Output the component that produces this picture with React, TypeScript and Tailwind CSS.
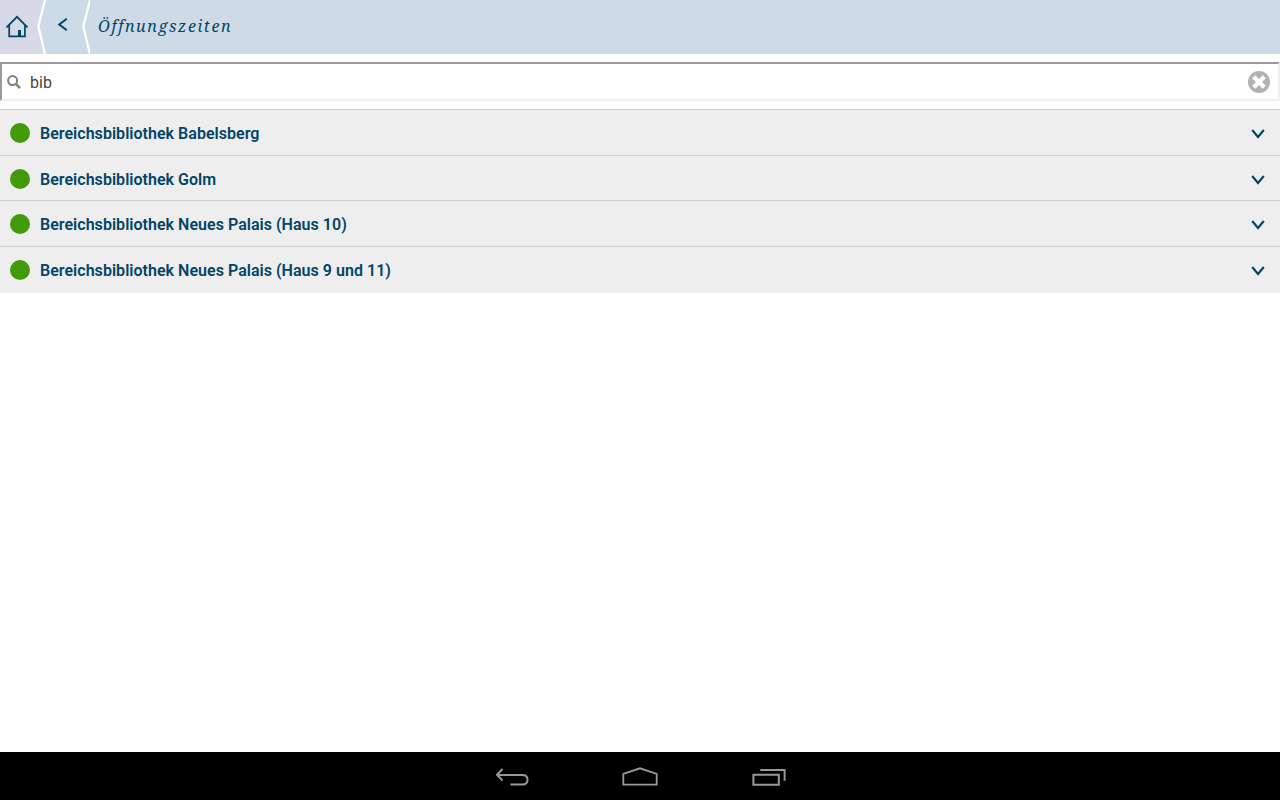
const rows = [
  { name: 'Bereichsbibliothek Babelsberg', size: 'h-[46px] pt-px' },
  { name: 'Bereichsbibliothek Golm', size: 'h-[45px] pt-0.5' },
  { name: 'Bereichsbibliothek Neues Palais (Haus 10)', size: 'h-[46px] pt-px' },
  { name: 'Bereichsbibliothek Neues Palais (Haus 9 und 11)', size: 'h-[47px]' },
];

function Header() {
  return (
    <header className="flex h-[54px] shrink-0 bg-[#cedae6] text-[#004568]">
      <a className="relative z-10 block h-[54px] w-[45px]" aria-label="Home">
        <svg width="46" height="54" viewBox="0 0 46 54" className="max-w-none" fill="none">
          <path d="M0 0H45L38.5 27L45 54H0Z" fill="#d7dae6" />
          <path d="M45 0L38.3 26.5L45 54" stroke="#fff" strokeWidth="2.3" />
          <path d="M6.5 27.3L17 16.8L27.5 27.3M9.2 25.5V36.3H24.9V25.5" stroke="currentColor" strokeWidth="1.7" />
          <path d="M18 30H21V36H18Z" fill="currentColor" />
        </svg>
      </a>
      <a className="block h-[54px] w-[45px]" aria-label="Zurück">
        <svg width="45" height="54" viewBox="0 0 45 54" fill="none">
          <path d="M0 0H45L38.5 27L45 54H0Z" fill="#cddbe6" />
          <path d="M45 0L38.3 26.5L45 54" stroke="#fff" strokeWidth="2.3" />
          <path d="M21.8 18.8L14.3 24.5L21.8 30.2" stroke="currentColor" strokeWidth="2" />
        </svg>
      </a>
      <h1 className="pt-[14px] pl-2 font-['Noto_Serif','DejaVu_Serif',serif] text-[16px] leading-6 font-normal tracking-[1.62px] italic">
        Öffnungszeiten
      </h1>
    </header>
  );
}

function Search() {
  return (
    <div className="mt-2 flex h-[39px] shrink-0 items-center border-2 border-t-[#9a9a9a] border-r-[#eee] border-b-[#eee] border-l-[#9a9a9a] pr-2 pl-[5px]">
      <svg width="14" height="14" viewBox="0 0 14 14" fill="none" stroke="#808080">
        <circle cx="5.6" cy="5.6" r="4.5" strokeWidth="2" />
        <path d="M8.8 8.8L13.1 13.1" strokeWidth="2.4" />
      </svg>
      <span className="grow pt-0.5 pl-[9px] text-base text-[#444]">bib</span>
      <svg width="22" height="22" viewBox="0 0 22 22">
        <circle cx="11" cy="11" r="11" fill="#b2b2b2" />
        <path d="M5.7 5.7L16.3 16.3M16.3 5.7L5.7 16.3" stroke="#fff" strokeWidth="4.4" />
      </svg>
    </div>
  );
}

function NavigationBar() {
  return (
    <nav className="flex h-12 shrink-0 items-center justify-center gap-[90px] bg-black">
      <svg width="40" height="24" viewBox="0 0 40 24" fill="none" stroke="#999" strokeWidth="2">
        <path d="M10.6 5L5 10.8L10.6 16.6M5.5 11H30.5C34 11 35.5 12.8 35.5 15.8S34 20.6 30.5 20.6H18.5" />
      </svg>
      <svg width="36" height="24" viewBox="0 0 36 24" fill="none" stroke="#999" strokeWidth="1.8">
        <path d="M1.3 20.7V9.8L18 4.3L34.7 9.8V20.7Z" />
      </svg>
      <svg width="40" height="24" viewBox="0 0 40 24" fill="none" stroke="#999" strokeWidth="2">
        <path d="M5.4 10.7H30.8V20.8H5.4ZM12.3 6H36.6V16.8" />
      </svg>
    </nav>
  );
}

export default function App() {
  return (
    <div className="flex h-screen flex-col overflow-hidden bg-white font-[Roboto,sans-serif]">
      <Header />
      <Search />
      <ul className="mt-2 grow">
        {rows.map((row) => (
          <li key={row.name} className={`flex ${row.size} items-center border-t border-[#ccc] bg-[#eee] pr-[15px] pl-2.5`}>
            <span className="size-5 rounded-full bg-[#429a0a]" />
            <span className="grow pt-0.5 pl-2.5 text-base font-semibold tracking-[0.03px] whitespace-nowrap text-[#004568]">
              {row.name}
            </span>
            <svg className="mt-px" width="14" height="10" viewBox="0 0 14 10" fill="none" stroke="#004568" strokeWidth="2.1">
              <path d="M1.2 1L7 8L12.8 1" />
            </svg>
          </li>
        ))}
      </ul>
      <NavigationBar />
    </div>
  );
}
